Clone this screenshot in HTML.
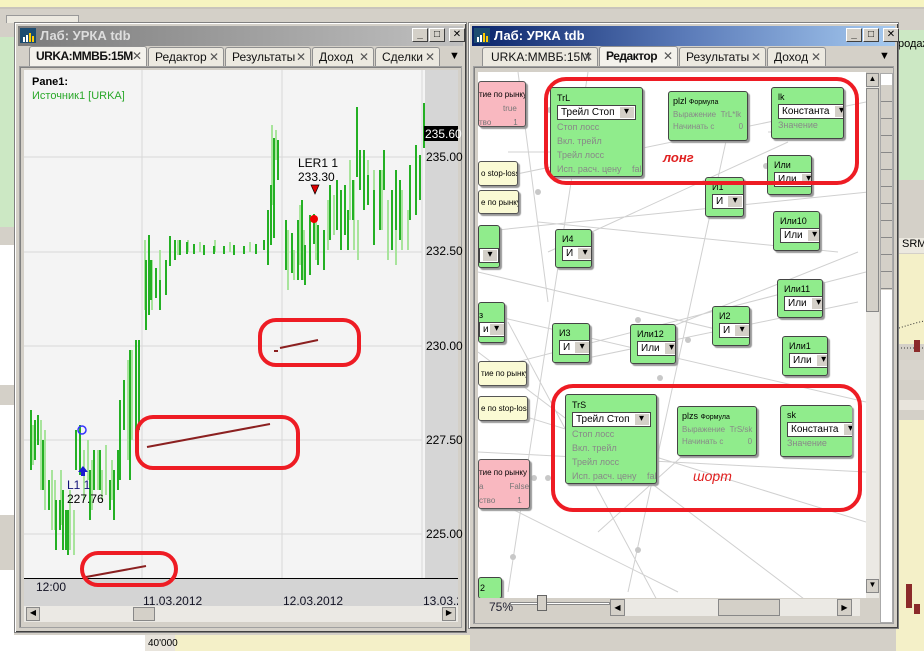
<!DOCTYPE html>
<html><head><meta charset="utf-8">
<style>
*{margin:0;padding:0;box-sizing:border-box}
body{width:924px;height:651px;overflow:hidden;background:#d4d0c8;position:relative;font-family:"Liberation Sans","DejaVu Sans",sans-serif;font-size:11px}
.a{position:absolute}
.win{position:absolute;background:#d4d0c8;border:1px solid #808080;box-shadow:inset 1px 1px 0 #fff,inset -1px -1px 0 #404040}
.tb{position:absolute;left:3px;right:3px;top:3px;height:20px;color:#fff;font-weight:bold;font-size:13px;padding:2px 0 0 22px}
.tbtn{position:absolute;top:5px;width:16px;height:14px;background:#d4d0c8;border:1px solid;border-color:#fff #404040 #404040 #fff;font-size:10px;font-weight:bold;text-align:center;line-height:12px;color:#000}
.tab{position:absolute;top:47px;height:19px;border:1px solid #909090;border-bottom:none;border-radius:3px 3px 0 0;background:#ece9e0;font-size:12px;padding:2px 0 0 6px;color:#111;white-space:nowrap;overflow:hidden}
.tab b{font-weight:bold;letter-spacing:-0.5px}
.x{position:absolute;right:4px;top:2px;color:#555;font-size:12px}
.box{position:absolute;background:#90ec8c;border:1px solid #444;border-radius:3px;box-shadow:2px 2px 1px #999;font-size:9px;color:#888;padding:3px 0 0 6px;line-height:14px;white-space:nowrap;overflow:hidden}
.box .n{color:#000}
.dd{display:inline-block;background:#fff;border:1px solid #444;color:#000;height:15px;padding:0 20px 0 3px;position:relative;line-height:13px;font-size:10px}
.dd:after{content:"▾";position:absolute;right:1px;top:1px;width:14px;height:11px;background:#d4d0c8;font-size:10px;line-height:10px;text-align:center}
.pink{position:absolute;background:#f9b8c0;border:1px solid #555;border-radius:3px;font-size:8px;color:#000;box-shadow:2px 2px 1px #999;white-space:nowrap;overflow:hidden}
.yel{position:absolute;background:#fafad4;border:1px solid #555;border-radius:3px;font-size:8px;color:#000;box-shadow:2px 2px 1px #999;padding:7px 0 0 2px;white-space:nowrap;overflow:hidden}
.ell{position:absolute;border:4px solid #ee1c24;border-radius:18px}
</style></head><body>
<div class="a" style="left:0;top:0;width:924px;height:7px;background:#f6f4c0"></div>
<div class="a" style="left:0;top:7px;width:924px;height:2px;background:#c8c4bc"></div>
<div class="a" style="top:15px;left:6px;width:73px;height:8px;background:#ece9e0;border:1px solid #999;border-bottom:none"></div>
<div class="a" style="left:0;top:37px;width:14px;height:190px;background:#cce8c4"></div>
<div class="a" style="left:0;top:245px;width:14px;height:140px;background:#fff"></div>
<div class="a" style="left:0;top:405px;width:14px;height:110px;background:#fff"></div>
<div class="a" style="left:0;top:570px;width:14px;height:81px;background:#fff"></div>
<div class="a" style="left:0;top:635px;width:145px;height:16px;background:#fff"></div>
<div class="a" style="left:145px;top:635px;width:30px;height:16px;background:#e8e4dc"></div>
<div class="a" style="left:175px;top:635px;width:295px;height:16px;background:#f4f0c8"></div>
<div class="a" style="left:148px;top:638px;font-size:10px">40'000</div>
<div class="a" style="left:896px;top:30px;width:28px;height:150px;background:#cce8c4"></div>
<div class="a" style="left:898px;top:38px;font-size:11px">родаж</div>
<div class="a" style="left:896px;top:192px;width:28px;height:10px;background:#d4d0c8"></div>
<div class="a" style="left:898px;top:238px;width:26px;height:15px;background:#ece9e0;font-size:11px;padding-left:4px">SRM</div>
<div class="a" style="left:896px;top:254px;width:28px;height:90px;background:#f4f0c8"></div>
<div class="a" style="left:896px;top:360px;width:28px;height:20px;background:#d8d4cc"></div>
<div class="a" style="left:896px;top:400px;width:28px;height:10px;background:#e8e4dc"></div>
<div class="a" style="left:896px;top:420px;width:28px;height:231px;background:#f4f0c8"></div>
<svg class="a" style="left:896px;top:254px" width="28" height="397"><path d="M2 94h26M0 75q15 -5 28 -8" stroke="#333" stroke-dasharray="1 2" fill="none"/><rect x="18" y="86" width="6" height="12" fill="#8b2a2a"/><rect x="10" y="330" width="6" height="24" fill="#8b2a2a"/><rect x="18" y="350" width="6" height="10" fill="#8b2a2a"/></svg>

<!-- LEFT WINDOW -->
<div class="win" style="left:14px;top:22px;width:453px;height:611px">
 <div class="tb" style="background:linear-gradient(90deg,#7c7c7c,#c0c0c0)"><svg class="a" style="left:2px;top:2px" width="16" height="15"><rect width="16" height="15" fill="#1c4c70"/><rect x="3" y="9" width="2" height="5" fill="#fff"/><rect x="6" y="7" width="2" height="7" fill="#fff"/><rect x="9" y="5" width="2" height="9" fill="#fc0"/><rect x="12" y="8" width="2" height="6" fill="#fc0"/></svg><span style="color:#ddd">Лаб: УРКА tdb</span></div>
 <div class="tbtn" style="left:397px">_</div><div class="tbtn" style="left:414px">□</div><div class="tbtn" style="left:434px">✕</div>
</div>
<div class="tab" style="left:29px;width:118px;background:#f4f2ec;top:46px;height:21px"><b>URKA:MMBБ:15M</b><span class="x">✕</span></div>
<div class="tab" style="left:148px;width:76px">Редактор<span class="x">✕</span></div>
<div class="tab" style="left:225px;width:86px">Результаты<span class="x">✕</span></div>
<div class="tab" style="left:312px;width:62px">Доход<span class="x">✕</span></div>
<div class="tab" style="left:375px;width:65px">Сделки<span class="x">✕</span></div>
<div class="a" style="left:449px;top:50px;font-size:11px">▼</div>
<div class="a" style="left:19px;top:66px;width:443px;height:562px;border:1px solid #a0a0a0;box-shadow:inset 1px 1px 0 #808080"></div>
<div class="a" style="left:24px;top:70px;width:434px;height:509px;background:#f4f4f4"></div>
<div class="a" style="left:425px;top:70px;width:33px;height:509px;background:#d6d6d6"></div>
<div class="a" style="left:24px;top:578px;width:434px;height:28px;background:#d4d4d4;border-top:1px solid #000"></div>
<svg class="a" style="left:24px;top:70px" width="434" height="508">
<g transform="translate(-24,-70)">
<g stroke="#d8d8d8" stroke-width="1"><path d="M142 70v508M282 70v508M422 70v508M24 157h398M24 252h398M24 346h398M24 440h398M24 534h398"/></g>
<g stroke="#a8e49c" stroke-width="2" fill="none">
<path d="M33 425v40M41 420v70M45 430v80M52 470v60M55 480v50M61 470v55M70 490v60M74 510v45M84 450v50M88 440v40M92 460v50M98 450v40M102 470v30M106 445v50M112 460v40M128 360v100M132 350v90M136 370v80M145 240v70M152 260v50M160 250v40M170 238v20M178 240v15M188 240v12M200 242v10M215 240v12M230 242v10M250 242v10M272 125v80M276 130v30M288 230v60M294 250v30M300 205v60M304 230v50M316 220v40M328 200v50M334 195v40M350 160v60M354 180v70M358 220v40M368 160v40M374 170v60M382 170v60M388 200v60M396 215v50M402 190v60M408 210v40"/>
</g>
<g stroke="#24b024" stroke-width="2" fill="none">
<path d="M31 410v60M35 420v40M38 415v30M43 440v50M49 480v30M56 500v50M60 500v30M63 490v60M66 510v40M68 510v45M76 430v40M80 425v50M90 470v50M94 450v40M100 450v40M110 480v30M114 470v50M118 450v40M120 400v80M124 380v50M130 350v130M136 340v100M139 340v90M146 260v70M149 235v80M151 260v40M156 268v30M160 280v30M166 260v35M170 236v30M175 240v20M180 240v15M187 242v12M194 244v10M204 245v10M214 246v8M224 246v8M234 245v10M244 246v8M256 244v10M264 240v10M268 210v55M271 185v60M274 138v100M278 140v40M286 220v50M292 233v40M298 220v60M302 200v80M305 245v40M310 215v60M314 214v30M318 225v40M324 230v40M330 185v55M337 180v50M341 190v60M345 185v50M348 210v40M353 180v40M357 107v70M360 150v40M364 150v60M368 175v30M374 190v55M380 170v60M384 150v40M392 190v60M396 170v60M400 180v60M410 165v55M416 145v70M420 155v45M424 103v45"/>
</g>
<g stroke="#8b2020" stroke-width="2" fill="none"><path d="M86 577l60-11M147 447l123-23M280 348l38-8M274 351h4"/></g>
<circle cx="314" cy="219" r="4" fill="#e00"/>
<circle cx="82" cy="430" r="4" fill="none" stroke="#33f" stroke-width="1.5"/>
<path d="M83 466l-5 6h3v4h4v-4h3z" fill="#1a1ad0"/>
<path d="M311 185h8l-4 9z" fill="#d00" stroke="#000" stroke-width=".7"/>
<rect x="424" y="126" width="34" height="15" fill="#000"/>
</g>
</svg>
<div class="a" style="left:32px;top:76px;font-weight:bold;font-size:11px">Pane1:</div>
<div class="a" style="left:32px;top:90px;color:#2aa82a;font-size:11px">Источник1 [URKA]</div>
<div class="a" style="left:298px;top:156px;font-size:12px;line-height:14px">LER1 1<br>233.30</div>
<div class="a" style="left:67px;top:478px;font-size:12px;line-height:14px"><span style="color:#117">L1 1</span><br>227.76</div>
<div class="a" style="left:425px;top:127px;color:#fff;font-size:12px">235.60</div>
<div class="a" style="left:426px;top:150px;font-size:12px">235.00</div>
<div class="a" style="left:426px;top:244px;font-size:12px">232.50</div>
<div class="a" style="left:426px;top:339px;font-size:12px">230.00</div>
<div class="a" style="left:426px;top:433px;font-size:12px">227.50</div>
<div class="a" style="left:426px;top:527px;font-size:12px">225.00</div>
<div class="a" style="left:36px;top:580px;font-size:12px;color:#112">12:00</div>
<div class="a" style="left:143px;top:594px;font-size:12px;color:#112">11.03.2012</div>
<div class="a" style="left:283px;top:594px;font-size:12px;color:#112">12.03.2012</div>
<div class="a" style="left:423px;top:594px;font-size:12px;color:#112;width:35px;overflow:hidden;white-space:nowrap">13.03.2012</div>
<div class="a" style="left:24px;top:606px;width:434px;height:16px;background:#ebe9e4"></div>
<div class="a" style="left:26px;top:607px;width:14px;height:14px;background:#d4d0c8;border:1px solid #888;font-size:8px;text-align:center">◀</div>
<div class="a" style="left:133px;top:607px;width:22px;height:14px;background:#d4d0c8;border:1px solid #888"></div>
<div class="a" style="left:442px;top:607px;width:14px;height:14px;background:#d4d0c8;border:1px solid #888;font-size:8px;text-align:center">▶</div>
<div class="ell" style="left:80px;top:551px;width:98px;height:36px"></div>
<div class="ell" style="left:135px;top:415px;width:165px;height:55px"></div>
<div class="ell" style="left:258px;top:318px;width:103px;height:49px"></div>

<!-- RIGHT WINDOW -->
<div class="win" style="left:468px;top:22px;width:431px;height:607px">
 <div class="tb" style="background:linear-gradient(90deg,#0a246a,#5a7ab8 50%,#a6caf0)"><svg class="a" style="left:2px;top:2px" width="16" height="15"><rect width="16" height="15" fill="#1c4c70"/><rect x="3" y="9" width="2" height="5" fill="#fff"/><rect x="6" y="7" width="2" height="7" fill="#fff"/><rect x="9" y="5" width="2" height="9" fill="#fc0"/><rect x="12" y="8" width="2" height="6" fill="#fc0"/></svg>Лаб: УРКА tdb</div>
 <div class="tbtn" style="left:377px">_</div><div class="tbtn" style="left:394px">□</div><div class="tbtn" style="left:414px">✕</div>
</div>
<div class="tab" style="left:482px;width:116px;padding-left:8px">URKA:MMBБ:15M<span class="x">✕</span></div>
<div class="tab" style="left:599px;width:79px;background:#f4f2ec;top:46px;height:21px"><b>Редактор</b><span class="x">✕</span></div>
<div class="tab" style="left:679px;width:87px">Результаты<span class="x">✕</span></div>
<div class="tab" style="left:767px;width:59px">Доход<span class="x">✕</span></div>
<div class="a" style="left:879px;top:50px;font-size:11px">▼</div>
<div class="a" style="left:473px;top:66px;width:421px;height:558px;border:1px solid #a0a0a0;box-shadow:inset 1px 1px 0 #808080"></div>
<div class="a" style="left:478px;top:72px;width:388px;height:526px;background:#fff;overflow:hidden">
<svg class="a" style="left:0;top:0" width="388" height="526"><g stroke="#d0d0d0" stroke-width="1" fill="none">
<path d="M0 110l388-80M40 0l30 230M0 160l390-40M0 300l388-100M0 330l388 120M30 250l150 280M0 280l330 250M70 180l240-110M0 240l388 90M90 290l290-60M60 150l300 30M0 380l388 20M0 420l200 100M110 0l-80 520M250 60l-100 460M30 80h70M290 60h20M120 460l100-90M0 200l250 60M180 260l200-80"/></g>
<g fill="#c8c8c8"><circle cx="72" cy="38" r="3"/><circle cx="240" cy="44" r="3"/><circle cx="60" cy="120" r="3"/><circle cx="288" cy="94" r="3"/><circle cx="325" cy="62" r="3"/><circle cx="340" cy="170" r="3"/><circle cx="160" cy="248" r="3"/><circle cx="254" cy="256" r="3"/><circle cx="210" cy="268" r="3"/><circle cx="20" cy="265" r="3"/><circle cx="130" cy="343" r="3"/><circle cx="182" cy="306" r="3"/><circle cx="160" cy="478" r="3"/><circle cx="35" cy="485" r="3"/><circle cx="70" cy="406" r="3"/><circle cx="56" cy="406" r="3"/></g></svg>
</div>
<div class="pink" style="left:478px;top:81px;width:48px;height:46px;padding:6px 0 0 0;line-height:14px">тие по рынку<br><span style="margin-left:24px;color:#777">true</span><br><span style="color:#777">тво<span style="margin-left:22px">1</span></span></div>
<div class="yel" style="left:478px;top:161px;width:40px;height:25px">o stop-loss</div>
<div class="yel" style="left:478px;top:190px;width:41px;height:24px">е по рынку</div>
<div class="box" style="left:478px;top:225px;width:22px;height:43px;padding:0"><span class="dd" style="margin-top:22px;padding-right:10px;width:20px"></span></div>
<div class="box" style="left:478px;top:302px;width:27px;height:41px;padding:5px 0 0 0"><span class="n">з</span><br><span class="dd" style="padding-right:16px">и</span></div>
<div class="yel" style="left:478px;top:361px;width:49px;height:25px">тие по рынку</div>
<div class="yel" style="left:478px;top:396px;width:50px;height:25px">е по stop-loss</div>
<div class="pink" style="left:478px;top:459px;width:52px;height:50px;padding:6px 0 0 0;line-height:14px">тие по рынку<br><span style="color:#777">а<span style="margin-left:26px">False</span></span><br><span style="color:#777">ство<span style="margin-left:22px">1</span></span></div>
<div class="box" style="left:478px;top:577px;width:24px;height:22px;padding:3px 0 0 1px"><span class="n">2</span></div>

<div class="box" style="left:550px;top:87px;width:93px;height:90px"><span class="n">TrL</span><br><span class="dd">Трейл Стоп</span><br>Стоп лосс<br>Вкл. трейл<br>Трейл лосс<br>Исп. расч. цену <span style="margin-left:8px">false</span></div>
<div class="box" style="left:668px;top:91px;width:80px;height:50px;line-height:12px;font-size:8px;padding-left:4px"><span class="n" style="font-size:9px">plzl <span style="font-size:7px">Формула</span></span><br>Выражение &nbsp;TrL*lk<br>Начинать с <span style="margin-left:22px">0</span></div>
<div class="box" style="left:771px;top:87px;width:73px;height:52px;line-height:13px"><span class="n">lk</span><br><span class="dd">Константа</span><br>Значение</div>
<div class="box" style="left:767px;top:155px;width:45px;height:40px;line-height:13px"><span class="n">Или</span><br><span class="dd">Или</span></div>
<div class="box" style="left:705px;top:177px;width:39px;height:40px;line-height:13px"><span class="n">И1</span><br><span class="dd">И</span></div>
<div class="box" style="left:773px;top:211px;width:47px;height:40px;line-height:13px"><span class="n">Или10</span><br><span class="dd">Или</span></div>
<div class="box" style="left:555px;top:229px;width:37px;height:39px;line-height:13px"><span class="n">И4</span><br><span class="dd">И</span></div>
<div class="box" style="left:777px;top:279px;width:46px;height:39px;line-height:13px"><span class="n">Или11</span><br><span class="dd">Или</span></div>
<div class="box" style="left:712px;top:306px;width:38px;height:40px;line-height:13px"><span class="n">И2</span><br><span class="dd">И</span></div>
<div class="box" style="left:552px;top:323px;width:38px;height:40px;line-height:13px"><span class="n">И3</span><br><span class="dd">И</span></div>
<div class="box" style="left:630px;top:324px;width:46px;height:40px;line-height:13px"><span class="n">Или12</span><br><span class="dd">Или</span></div>
<div class="box" style="left:782px;top:336px;width:46px;height:40px;line-height:13px"><span class="n">Или1</span><br><span class="dd">Или</span></div>
<div class="box" style="left:565px;top:394px;width:92px;height:90px"><span class="n">TrS</span><br><span class="dd">Трейл Стоп</span><br>Стоп лосс<br>Вкл. трейл<br>Трейл лосс<br>Исп. расч. цену <span style="margin-left:8px">false</span></div>
<div class="box" style="left:677px;top:406px;width:80px;height:50px;line-height:12px;font-size:8px;padding-left:4px"><span class="n" style="font-size:9px">plzs <span style="font-size:7px">Формула</span></span><br>Выражение &nbsp;TrS/sk<br>Начинать с <span style="margin-left:22px">0</span></div>
<div class="box" style="left:780px;top:405px;width:72px;height:52px;line-height:13px;border-right:none"><span class="n">sk</span><br><span class="dd">Константа</span><br>Значение</div>
<div class="ell" style="left:544px;top:77px;width:315px;height:108px;border-radius:22px"></div>
<div class="ell" style="left:551px;top:384px;width:311px;height:128px;border-radius:22px"></div>
<div class="a" style="left:663px;top:150px;color:#e02020;font-style:italic;font-size:13px;font-weight:bold">лонг</div>
<div class="a" style="left:693px;top:468px;color:#e02020;font-style:italic;font-size:14px">шорт</div>
<div class="a" style="left:866px;top:73px;width:13px;height:525px;background:#ebe9e4"></div>
<div class="a" style="left:866px;top:73px;width:13px;height:14px;background:#d4d0c8;border:1px solid #888;font-size:8px;text-align:center">▲</div>
<div class="a" style="left:866px;top:88px;width:13px;height:224px;background:#d4d0c8;border:1px solid #888"></div>
<div class="a" style="left:866px;top:579px;width:13px;height:14px;background:#d4d0c8;border:1px solid #888;font-size:8px;text-align:center">▼</div>
<div class="a" style="left:478px;top:598px;width:401px;height:20px;background:#d4d0c8"></div>
<div class="a" style="left:489px;top:600px;font-size:12px;color:#223">75%</div>
<div class="a" style="left:510px;top:602px;width:100px;height:3px;border:1px solid #888;background:#fff"></div>
<div class="a" style="left:537px;top:595px;width:10px;height:16px;background:#d4d0c8;border:1px solid #666"></div>
<div class="a" style="left:610px;top:599px;width:250px;height:17px;background:#ebe9e4"></div>
<div class="a" style="left:610px;top:599px;width:15px;height:17px;background:#d4d0c8;border:1px solid #888;font-size:8px;text-align:center;line-height:15px">◀</div>
<div class="a" style="left:718px;top:599px;width:62px;height:17px;background:#d4d0c8;border:1px solid #888"></div>
<div class="a" style="left:837px;top:599px;width:15px;height:17px;background:#d4d0c8;border:1px solid #888;font-size:8px;text-align:center;line-height:15px">▶</div>
<div class="a" style="left:880px;top:73px;width:13px;height:550px;background:#fff;border:1px solid #aaa"></div>
<div class="a" style="left:881px;top:85px;width:11px;height:205px;background:repeating-linear-gradient(#d4d0c8 0 16px,#888 16px 17px)"></div>
</body></html>
